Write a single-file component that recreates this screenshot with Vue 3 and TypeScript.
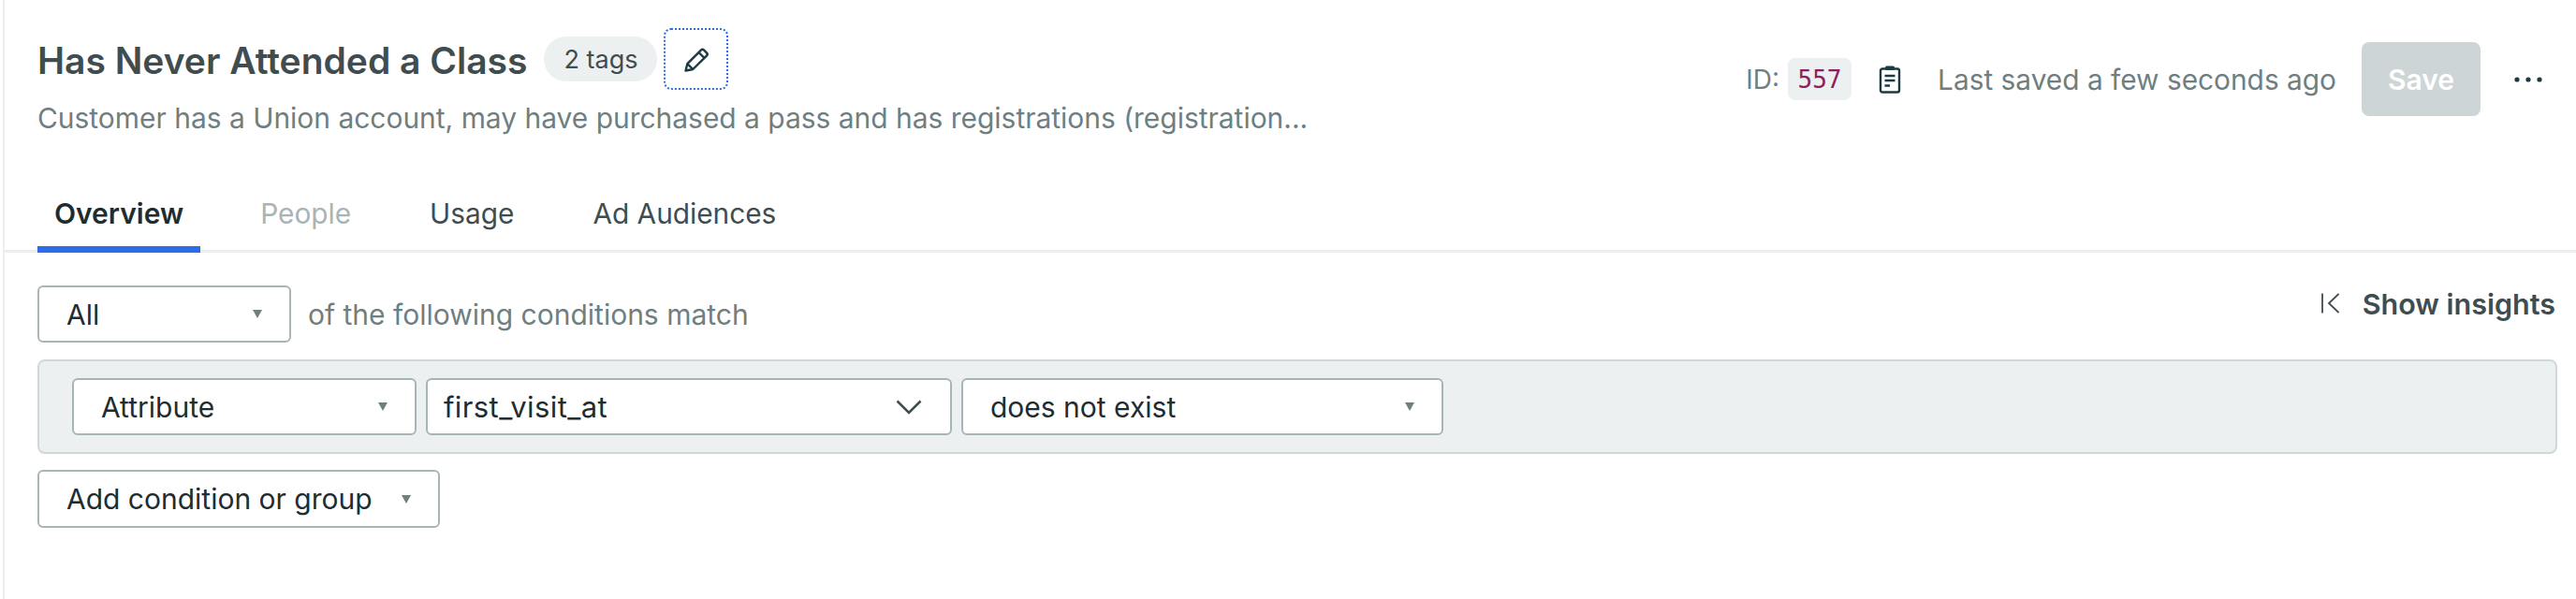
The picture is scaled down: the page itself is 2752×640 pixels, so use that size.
<script setup lang="ts">
const tabs = [
  { label: 'Overview', state: 'active' },
  { label: 'People', state: 'disabled' },
  { label: 'Usage', state: '' },
  { label: 'Ad Audiences', state: '' },
]
</script>

<template>
  <div class="page">
    <header class="header">
      <div class="head-left">
        <div class="title-row">
          <h1 class="title">Has Never Attended a Class</h1>
          <span class="tags">2 tags</span>
          <button class="edit" aria-label="Edit">
            <svg width="30" height="30" viewBox="0 0 30 30" fill="none" stroke="#1c3a40" stroke-width="2.4" stroke-linejoin="round">
              <path d="M3.5 27.5 L5.3 20.2 L20.1 5.4 Q21.5 4 22.9 5.4 L26.1 8.6 Q27.5 10 26.1 11.4 L11.3 26 Z" />
              <path d="M17.5 8 L23.5 14 M5.3 20.2 L11.3 26" />
            </svg>
          </button>
        </div>
        <p class="desc">Customer has a Union account, may have purchased a pass and has registrations (registration...</p>
      </div>
      <div class="head-right">
        <span class="id-label">ID:</span>
        <code class="id-code">557</code>
        <svg class="clip" width="24" height="30" viewBox="0 0 24 30" fill="none" stroke="#1c3a40" stroke-width="2.4">
          <rect x="2" y="3.5" width="20" height="25" rx="2" />
          <rect x="7" y="0.5" width="10" height="4.5" rx="1.5" fill="#1c3a40" stroke="none" />
          <path d="M6.5 11 H17.5 M6.5 16 H17.5 M6.5 21.5 H12" />
        </svg>
        <span class="saved">Last saved a few seconds ago</span>
        <button class="save">Save</button>
        <svg class="dots" width="30" height="6" viewBox="0 0 30 6" fill="#1c3a40">
          <circle cx="3" cy="3" r="2.6" />
          <circle cx="15" cy="3" r="2.6" />
          <circle cx="27" cy="3" r="2.6" />
        </svg>
      </div>
    </header>

    <nav class="tabs">
      <a v-for="t in tabs" :key="t.label" class="tab" :class="t.state">{{ t.label }}</a>
    </nav>

    <section class="body">
      <div class="toolbar">
        <div class="select sel-all">
          <span>All</span>
          <i class="caret"></i>
        </div>
        <span class="match">of the following conditions match</span>
        <div class="insights">
          <svg width="20" height="22" viewBox="0 0 20 22" fill="none" stroke="#3f4d50" stroke-width="1.8">
            <path d="M1 0.5 V21.5 M18.5 1 L8 11 L18.5 21" />
          </svg>
          <span>Show insights</span>
        </div>
      </div>

      <div class="group">
        <div class="select sel-attr">
          <span>Attribute</span>
          <i class="caret"></i>
        </div>
        <div class="select sel-field">
          <span class="field-name">first_visit_at</span>
          <svg width="28" height="16" viewBox="0 0 28 16" fill="none" stroke="#3f4d50" stroke-width="2.6">
            <path d="M1.5 1.5 L14 14 L26.5 1.5" />
          </svg>
        </div>
        <div class="select sel-op">
          <span>does not exist</span>
          <i class="caret"></i>
        </div>
      </div>

      <div class="select sel-add">
        <span>Add condition or group</span>
        <i class="caret"></i>
      </div>
    </section>
  </div>
</template>

<style scoped>
.page {
  width: 2750px;
  height: 640px;
  box-sizing: border-box;
  margin-left: 3px;
  border-left: 2px solid #eceff0;
  font-family: Inter, "Liberation Sans", sans-serif;
  color: #1f2d30;
  background: #fff;
  overflow: hidden;
}
.header {
  display: flex;
  justify-content: space-between;
  align-items: flex-start;
  padding: 30px 35px 0 35px;
}
.title-row {
  display: flex;
  align-items: center;
  height: 66px;
}
.title {
  margin: 0;
  padding-top: 3px;
  font-size: 39px;
  font-weight: 600;
  line-height: 44px;
  color: #3f4d50;
}
.tags {
  margin-left: 18px;
  height: 48px;
  padding: 0 21px;
  display: flex;
  align-items: center;
  border-radius: 24px;
  background: #ecf0f0;
  font-size: 27px;
  color: #3f4d50;
}
.edit {
  margin-left: 7px;
  width: 69px;
  height: 66px;
  padding: 0;
  display: flex;
  align-items: center;
  justify-content: center;
  background: #fff;
  border: 2px dotted #2b6de8;
  border-radius: 8px;
}
.desc {
  margin: 10px 0 0;
  font-size: 29.95px;
  line-height: 40px;
  color: #6f7f81;
}
.head-right {
  display: flex;
  align-items: center;
  margin-top: 15px;
  height: 79px;
}
.id-label {
  font-size: 28px;
  color: #6f7f81;
}
.id-code {
  margin-left: 9px;
  width: 68px;
  height: 45px;
  display: flex;
  align-items: center;
  justify-content: center;
  border-radius: 8px;
  background: #ecf0f0;
  font-family: "DejaVu Sans Mono", monospace;
  font-size: 26px;
  color: #8e1f5f;
}
.clip {
  margin-left: 29px;
}
.saved {
  margin-left: 39px;
  font-size: 29.85px;
  color: #6f7f81;
}
.save {
  margin-left: 27px;
  width: 127px;
  height: 79px;
  border: 0;
  border-radius: 8px;
  background: #cdd5d6;
  color: #fff;
  font-family: inherit;
  font-size: 30px;
  font-weight: 600;
}
.dots {
  margin-left: 36px;
  margin-right: 2px;
}
.tabs {
  display: flex;
  gap: 48px;
  margin-top: 46px;
  padding-left: 35px;
  height: 78px;
  box-sizing: border-box;
  border-bottom: 3px solid #eceff0;
}
.tab {
  height: 78px;
  box-sizing: border-box;
  padding: 16px 18px 0;
  font-size: 29.8px;
  line-height: 40px;
  color: #3f4d50;
}
.tab.active {
  margin-right: -2px;
  font-size: 30px;
  font-weight: 600;
  color: #1f2d30;
  border-bottom: 7px solid #2b6de8;
}
.tab.disabled {
  color: #a7b5b6;
}
.body {
  padding: 35px 21px 0 35px;
}
.toolbar {
  display: flex;
  align-items: center;
  height: 61px;
}
.select {
  box-sizing: border-box;
  height: 61px;
  display: flex;
  align-items: center;
  justify-content: space-between;
  background: #fff;
  border: 2px solid #a7b5b6;
  border-radius: 6px;
  font-size: 30px;
  color: #1f2d30;
}
.caret {
  width: 0;
  height: 0;
  border-left: 5px solid transparent;
  border-right: 5px solid transparent;
  border-top: 9px solid #6f7f81;
}
.sel-all {
  width: 271px;
  padding: 0 29px;
}
.match {
  margin-left: 18px;
  font-size: 30px;
  color: #6f7f81;
}
.insights {
  margin-left: auto;
  margin-right: 2px;
  align-self: flex-start;
  display: flex;
  align-items: center;
  gap: 24px;
  height: 38px;
  font-size: 30.5px;
  font-weight: 600;
  color: #3f4d50;
}
.group {
  box-sizing: border-box;
  margin-top: 18px;
  height: 101px;
  display: flex;
  align-items: center;
  padding-left: 35px;
  background: #ecf0f0;
  border: 2px solid #d0d8d9;
  border-radius: 8px;
}
.sel-attr {
  width: 368px;
  padding: 0 29px;
}
.sel-field {
  margin-left: 10px;
  width: 562px;
  padding: 0 30px 0 17px;
}
.field-name {
  font-size: 31px;
  letter-spacing: 0.4px;
}
.sel-op {
  margin-left: 10px;
  width: 515px;
  padding: 0 29px;
}
.sel-add {
  margin-top: 17px;
  width: 430px;
  height: 62px;
  padding: 0 29px;
}
</style>
